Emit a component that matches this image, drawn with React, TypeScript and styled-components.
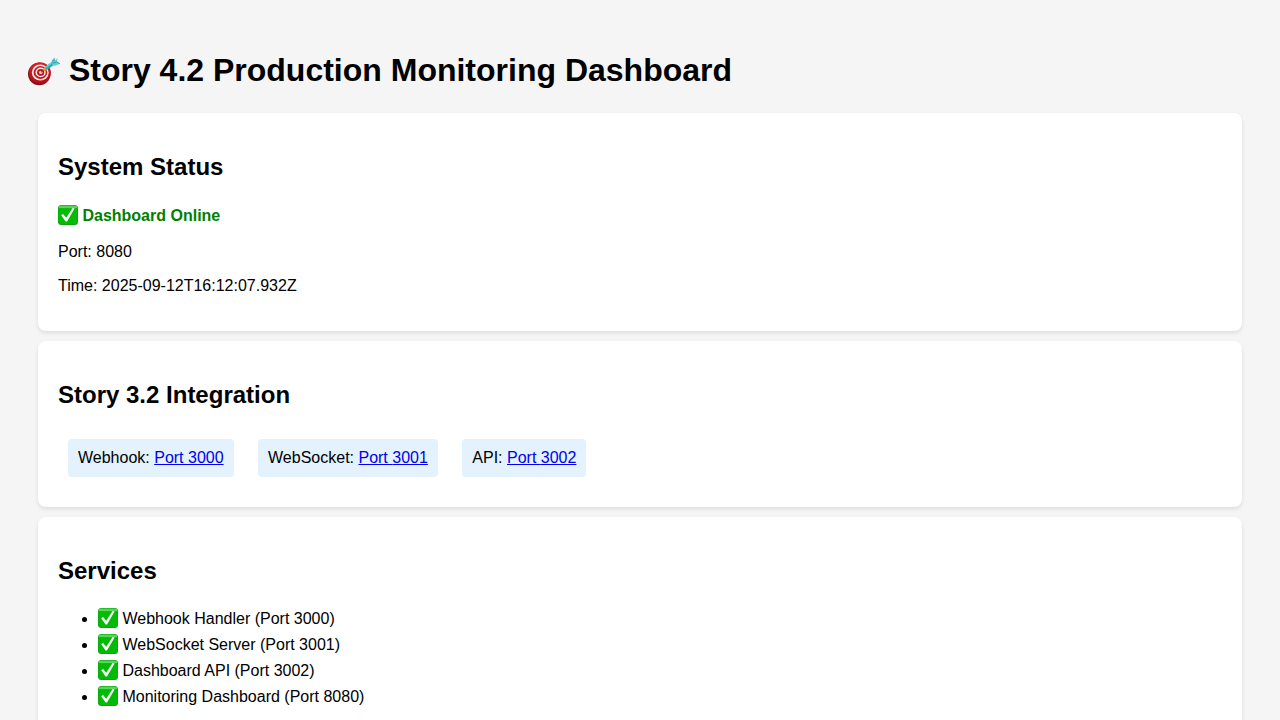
import React from "react";
import styled, { createGlobalStyle } from "styled-components";

const GlobalStyle = createGlobalStyle`
  body {
    margin: 0;
    padding: 28px;
    background: #f5f5f5;
    color: #000;
    font-family: "Liberation Sans", Arial, sans-serif;
    font-size: 16px;
    line-height: 18px;
  }
`;

const Title = styled.h1`
  margin: 22px 0;
  font-size: 32px;
  line-height: 41px;
`;

const TargetSvg = styled.svg`
  width: 34px;
  height: 32px;
  margin: 0 -1px;
  vertical-align: -7px;
`;

const CheckSvg = styled.svg`
  width: 20px;
  height: 20px;
  vertical-align: top;
`;

const Card = styled.section`
  margin: 10px;
  padding: 20px;
  background: #fff;
  border-radius: 8px;
  box-shadow: 0 2px 4px rgba(0, 0, 0, 0.1);
`;

const Heading = styled.h2`
  margin: 20px 0;
  font-size: 24px;
  line-height: 28px;
`;

const Text = styled.p`
  margin: 16px 0;
`;

const Status = styled(Text)`
  padding-top: 4px;
  color: green;
  font-weight: bold;
  line-height: 22px;
`;

const Metric = styled.div`
  display: inline-block;
  margin: 10px;
  padding: 10px;
  background: #e3f2fd;
  border-radius: 4px;
`;

const Link = styled.a`
  color: #0000ee;
`;

const List = styled.ul`
  margin: 16px 0;
  padding-left: 40px;
`;

const Service = styled.li`
  padding: 3px 0 1px;
  line-height: 22px;
`;

function TargetIcon() {
  return (
    <TargetSvg viewBox="0 0 34 32" aria-hidden="true">
      <defs>
        <linearGradient id="rim" x1="0" y1="0" x2="0" y2="1">
          <stop offset="0" stopColor="#d3222a" />
          <stop offset="1" stopColor="#b50d14" />
        </linearGradient>
      </defs>
      <ellipse cx="12.2" cy="18" rx="11.2" ry="11.2" fill="#861114" />
      <ellipse cx="12.9" cy="16.8" rx="11" ry="10.6" fill="url(#rim)" />
      <ellipse cx="13.3" cy="16.5" rx="8.4" ry="8.1" fill="#f8eeec" />
      <ellipse cx="13.4" cy="16.5" rx="6.8" ry="6.5" fill="#c5141c" />
      <ellipse cx="13.6" cy="16.4" rx="5.1" ry="4.9" fill="#f8eeec" />
      <ellipse cx="13.7" cy="16.4" rx="3.6" ry="3.4" fill="#b5121a" />
      <ellipse cx="13.8" cy="16.4" rx="1.8" ry="1.7" fill="#f0d8d4" />
      <path d="M14 16.4 17.4 13.4" stroke="#7d3a30" strokeWidth="1.2" />
      <path d="M16.4 14.2 19.4 11.9" stroke="#e5a021" strokeWidth="2.8" />
      <path d="M18.6 12.4 26.6 6.9" stroke="#2ba3b2" strokeWidth="3.6" />
      <path d="M18.3 11.6 26 6" stroke="#62d5dc" strokeWidth="1.4" />
      <path d="M24.6 7.8 24.8 4.8 27.4 1.4 28.4 5.2Z" fill="#48b8c4" />
      <path d="M25 7.6 30.6 2 29.8 5.8 32.9 7.8 28.4 9.8 25.4 9.2Z" fill="#62ced6" />
      <path d="M26 7.4 29.8 5.8 32.9 7.8" fill="none" stroke="#238a99" strokeWidth="0.8" />
    </TargetSvg>
  );
}

function CheckIcon() {
  return (
    <CheckSvg viewBox="0 0 20 20" role="img" aria-label="OK">
      <defs>
        <linearGradient id="gloss" x1="0" y1="0" x2="0" y2="1">
          <stop offset="0" stopColor="#4bc64b" />
          <stop offset="0.6" stopColor="#66d866" />
          <stop offset="1" stopColor="#14bd14" />
        </linearGradient>
      </defs>
      <rect width="20" height="20" rx="3.5" fill="#159a17" />
      <rect x="0.4" y="0.3" width="19.2" height="18.9" rx="3.2" fill="#02bb05" />
      <rect x="0.7" y="0.4" width="18.6" height="3.2" rx="1.6" fill="url(#gloss)" />
      <path d="M3.2 10.2 5.1 9 8.2 12.8 14.6 3 16.6 3.4 9 16.6 7.6 16.6Z" fill="#fff" />
    </CheckSvg>
  );
}

const endpoints = [
  { name: "Webhook", port: 3000 },
  { name: "WebSocket", port: 3001 },
  { name: "API", port: 3002 },
];

const services = [
  "Webhook Handler (Port 3000)",
  "WebSocket Server (Port 3001)",
  "Dashboard API (Port 3002)",
  "Monitoring Dashboard (Port 8080)",
];

export default function App() {
  return (
    <main>
      <GlobalStyle />
      <Title>
        <TargetIcon /> Story 4.2 Production Monitoring Dashboard
      </Title>
      <Card>
        <Heading>System Status</Heading>
        <Status>
          <CheckIcon /> Dashboard Online
        </Status>
        <Text>Port: 8080</Text>
        <Text>Time: 2025-09-12T16:12:07.932Z</Text>
      </Card>
      <Card>
        <Heading>Story 3.2 Integration</Heading>
        {endpoints.map((e) => (
          <React.Fragment key={e.name}>
            <Metric>
              {e.name}: <Link href={`http://localhost:${e.port}`}>Port {e.port}</Link>
            </Metric>{" "}
          </React.Fragment>
        ))}
      </Card>
      <Card>
        <Heading>Services</Heading>
        <List>
          {services.map((s) => (
            <Service key={s}>
              <CheckIcon /> {s}
            </Service>
          ))}
        </List>
      </Card>
    </main>
  );
}
